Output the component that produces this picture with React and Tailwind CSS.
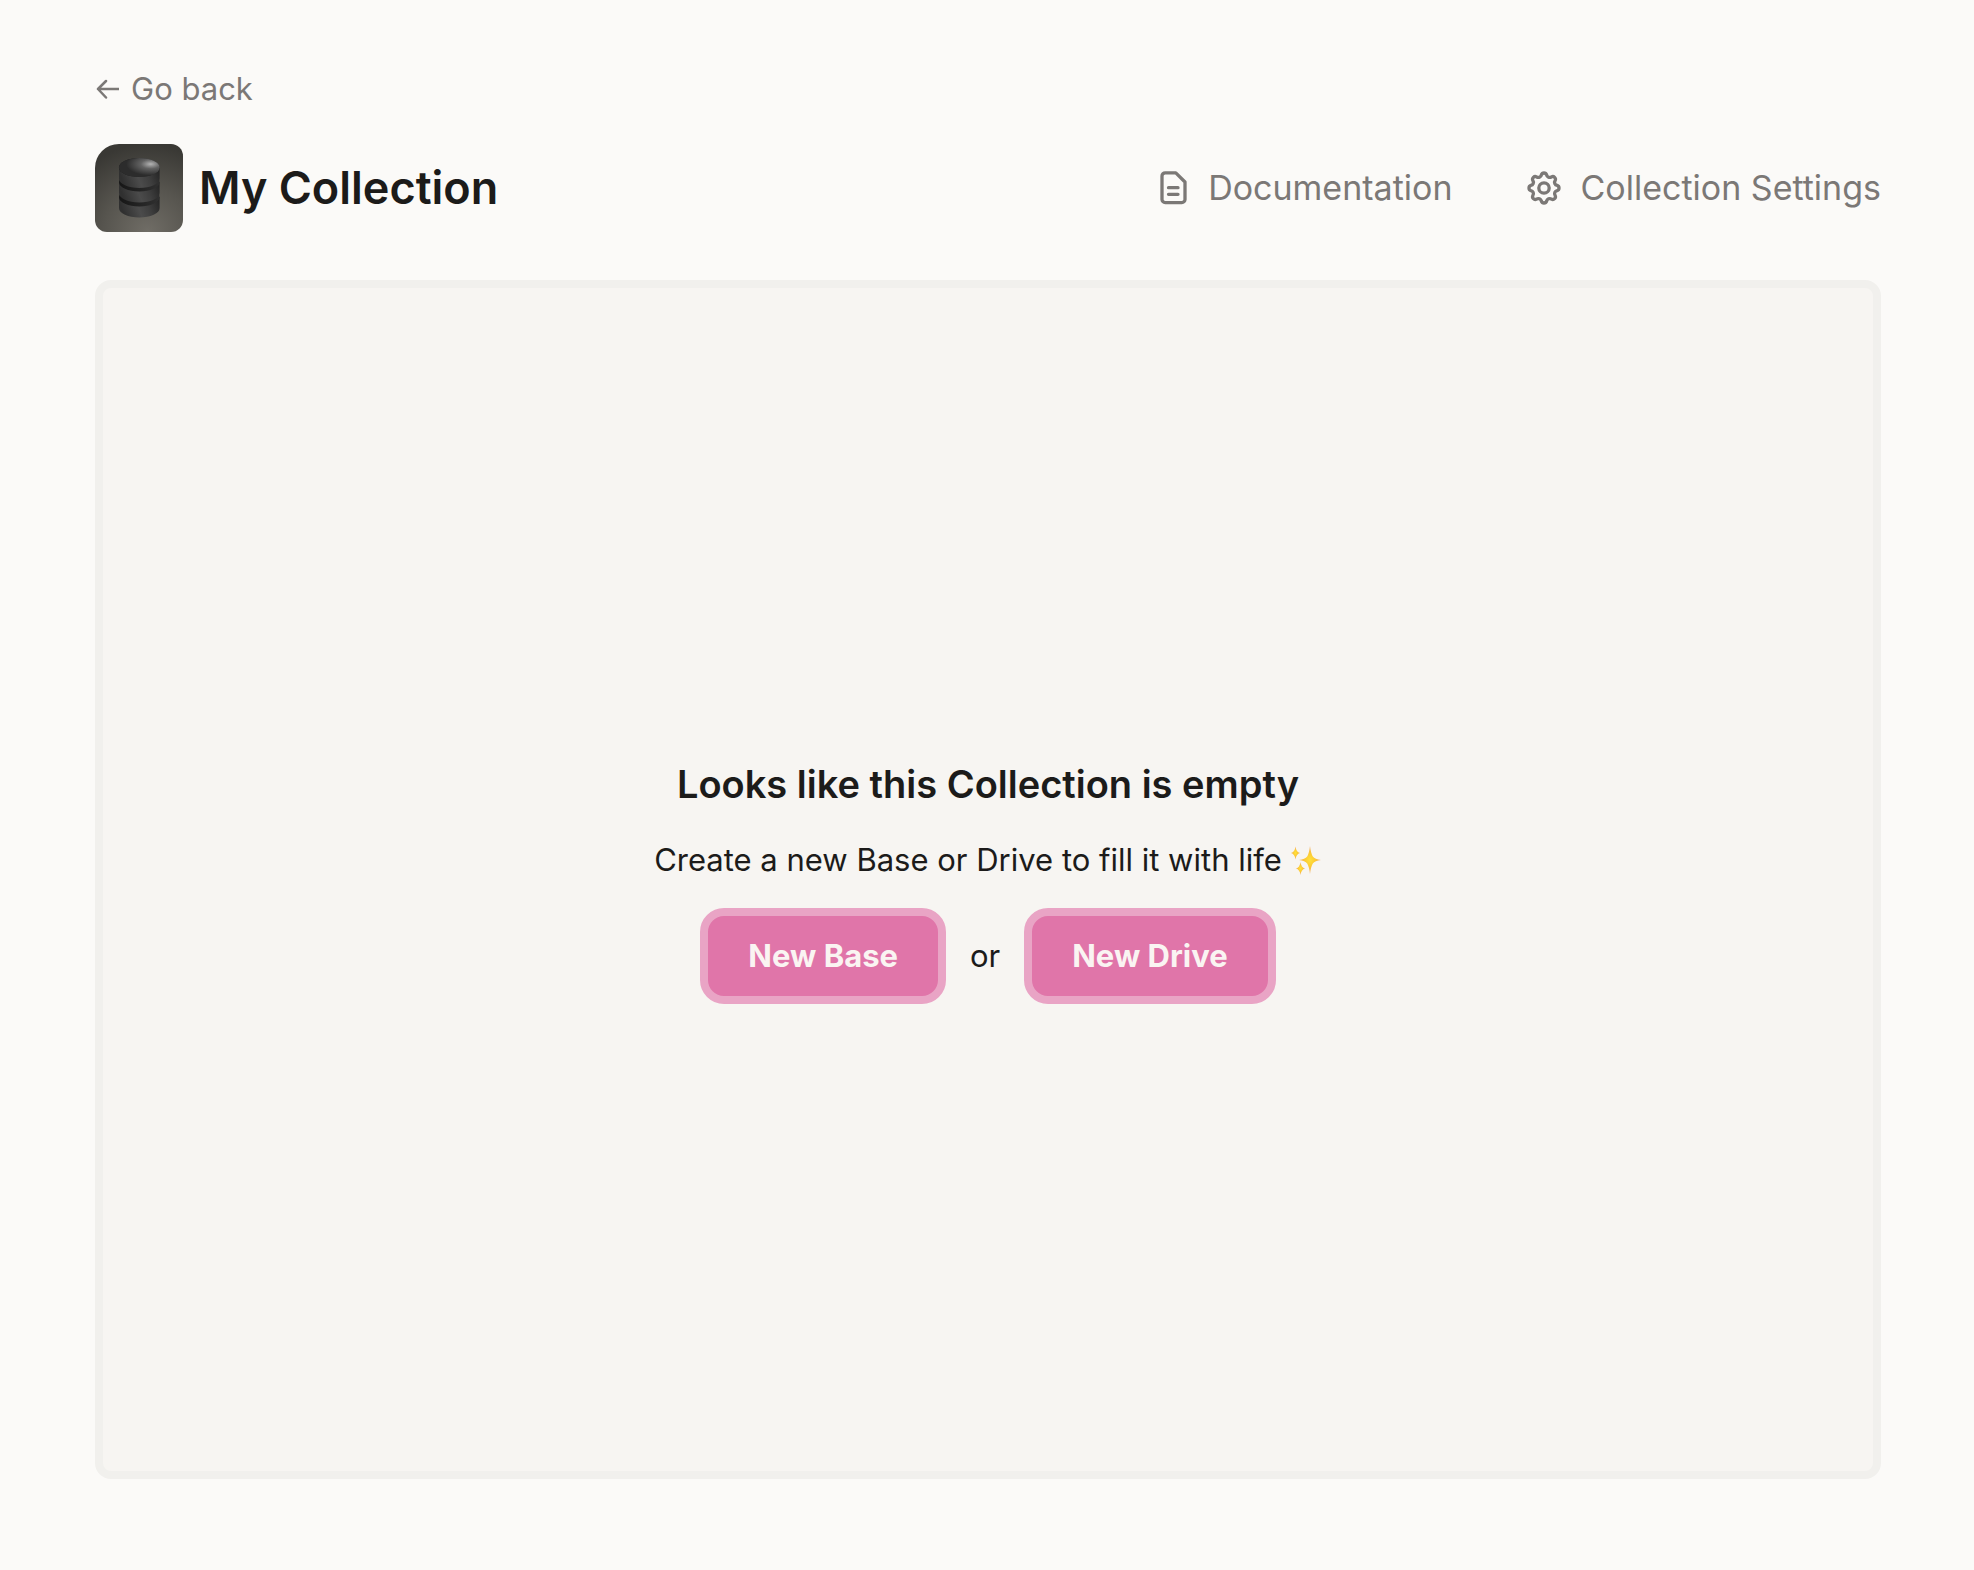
function ArrowLeft() {
  return (
    <svg className="h-6 w-6" viewBox="0 0 24 24" fill="none" stroke="currentColor" strokeWidth="2.500" strokeLinecap="round" strokeLinejoin="round" aria-hidden="true">
      <path d="M24 12H3M11 4L3 12l8 8.500" />
    </svg>
  );
}

function DocumentIcon() {
  return (
    <svg className="h-9 w-7" viewBox="0 0 28 36" fill="none" stroke="currentColor" strokeWidth="3.300" strokeLinecap="round" strokeLinejoin="round" aria-hidden="true">
      <path d="M5.200 2.800H15.800L25 12V29.400a3.200 3.200 0 0 1-3.200 3.200H5.200A3.200 3.200 0 0 1 2 29.400V6a3.200 3.200 0 0 1 3.200-3.200Z" />
      <path d="M8.500 17.700h9.500M8.500 24.300h9.500" />
    </svg>
  );
}

function gearPath(cx, cy, r) {
  const at = (k) => {
    const a = ((k - 0.5) * Math.PI) / 8 - Math.PI / 2;
    return `${(cx + r * Math.cos(a)).toFixed(2)} ${(cy + r * Math.sin(a)).toFixed(2)}`;
  };
  let d = `M${at(0)}`;
  for (let k = 1; k <= 16; k++) {
    d += k % 2 ? `A2.750 2.750 0 0 1 ${at(k)}` : `A3.100 3.100 0 0 0 ${at(k)}`;
  }
  return d + "Z";
}

function GearIcon() {
  return (
    <svg className="h-9 w-9" viewBox="0 0 36 36" fill="none" stroke="currentColor" strokeWidth="3.300" strokeLinejoin="round" aria-hidden="true">
      <path d={gearPath(18, 18, 13.4)} />
      <circle cx="18" cy="18" r="5.200" />
    </svg>
  );
}

function Disk({ y }) {
  return (
    <g>
      <path d={`M24 ${y}v11a20.300 9.500 0 0 0 40.600 0v-11Z`} fill="url(#disk-side)" />
      <ellipse cx="44.300" cy={y} rx="20.300" ry="9.500" fill="url(#disk-under)" />
    </g>
  );
}

function CollectionLogo() {
  return (
    <svg className="h-[88px] w-[88px] shrink-0 rounded-xl rounded-tl-3xl" viewBox="0 0 88 88" aria-hidden="true">
      <defs>
        <radialGradient id="logo-bg" cx="0.600" cy="1" r="1">
          <stop offset="0" stopColor="#706d66" />
          <stop offset="0.500" stopColor="#57554f" />
          <stop offset="1" stopColor="#393834" />
        </radialGradient>
        <linearGradient id="disk-side" x1="0" x2="1" y1="0.200" y2="0">
          <stop offset="0" stopColor="#303030" />
          <stop offset="0.400" stopColor="#4b4b4b" />
          <stop offset="0.650" stopColor="#3e3e3e" />
          <stop offset="1" stopColor="#222222" />
        </linearGradient>
        <linearGradient id="disk-under" x1="0" x2="1">
          <stop offset="0" stopColor="#161616" />
          <stop offset="1" stopColor="#303030" />
        </linearGradient>
        <radialGradient id="disk-top" cx="0.780" cy="0.320" r="0.600">
          <stop offset="0" stopColor="#b4b4b4" />
          <stop offset="0.400" stopColor="#626262" />
          <stop offset="1" stopColor="#2c2c2c" />
        </radialGradient>
      </defs>
      <rect width="88" height="88" fill="url(#logo-bg)" />
      <Disk y={53} />
      <Disk y={38} />
      <Disk y={23.5} />
      <ellipse cx="44.300" cy="23.500" rx="20.300" ry="9.500" fill="url(#disk-top)" />
    </svg>
  );
}

function Sparkles() {
  return (
    <svg className="h-8 w-8" viewBox="0 0 32 32" role="img" aria-label="sparkles">
      <defs>
        <radialGradient id="spark">
          <stop offset="0" stopColor="#ffe23c" />
          <stop offset="0.450" stopColor="#fccb34" />
          <stop offset="1" stopColor="#f0a868" />
        </radialGradient>
      </defs>
      <g fill="url(#spark)">
        <path d="M20 2Q20.800 9 22.800 12.500Q25 15.200 31 16Q25 16.800 22.800 19.500Q20.800 23 20 30Q19.200 23 17.200 19.500Q15 16.800 9 16Q15 15.200 17.200 12.500Q19.200 9 20 2Z" />
        <path d="M5.500 2.500Q6.200 8 10 9Q6.200 10 5.500 15.500Q4.800 10 1 9Q4.800 8 5.500 2.500Z" />
        <path d="M10.500 18Q11.200 23.500 15 24.500Q11.200 25.500 10.500 31Q9.800 25.500 6 24.500Q9.800 23.500 10.500 18Z" />
      </g>
    </svg>
  );
}

function PinkButton({ children }) {
  return (
    <button type="button" className="h-24 rounded-3xl border-8 border-[#e9a4c5] bg-[#e075a9] px-10 text-[31px] leading-10 font-bold text-[#faf4f2]">
      {children}
    </button>
  );
}

export default function App() {
  return (
    <div className="flex min-h-screen flex-col bg-[#fbfaf8] pt-[69px] pr-[93px] pb-[91px] pl-[95px] font-['Inter',sans-serif] text-[#1c1b1a]">
      <a href="#back" className="flex items-center gap-3 self-start text-[31px] leading-10 text-[#7b7876]">
        <ArrowLeft />
        Go back
      </a>
      <header className="mt-[35px] flex items-center justify-between">
        <div className="flex items-center gap-4">
          <CollectionLogo />
          <h1 className="text-[45px] leading-[56px] font-semibold">My Collection</h1>
        </div>
        <nav className="flex items-center gap-[74px] text-[34px] leading-10 text-[#7b7876]">
          <a href="#documentation" className="flex items-center gap-5">
            <DocumentIcon />
            Documentation
          </a>
          <a href="#settings" className="flex items-center gap-[18px]">
            <GearIcon />
            Collection Settings
          </a>
        </nav>
      </header>
      <main className="mt-12 flex flex-1 flex-col items-center justify-center rounded-2xl border-8 border-[#f1f0ed] bg-[#f7f5f2]">
        <h2 className="text-[38px] leading-[56px] font-semibold">Looks like this Collection is empty</h2>
        <p className="mt-6 flex items-center gap-2 text-[31px] leading-12">
          Create a new Base or Drive to fill it with life
          <Sparkles />
        </p>
        <div className="mt-6 flex items-center gap-6 text-[31px] leading-10">
          <PinkButton>New Base</PinkButton>
          <span>or</span>
          <PinkButton>New Drive</PinkButton>
        </div>
      </main>
    </div>
  );
}
